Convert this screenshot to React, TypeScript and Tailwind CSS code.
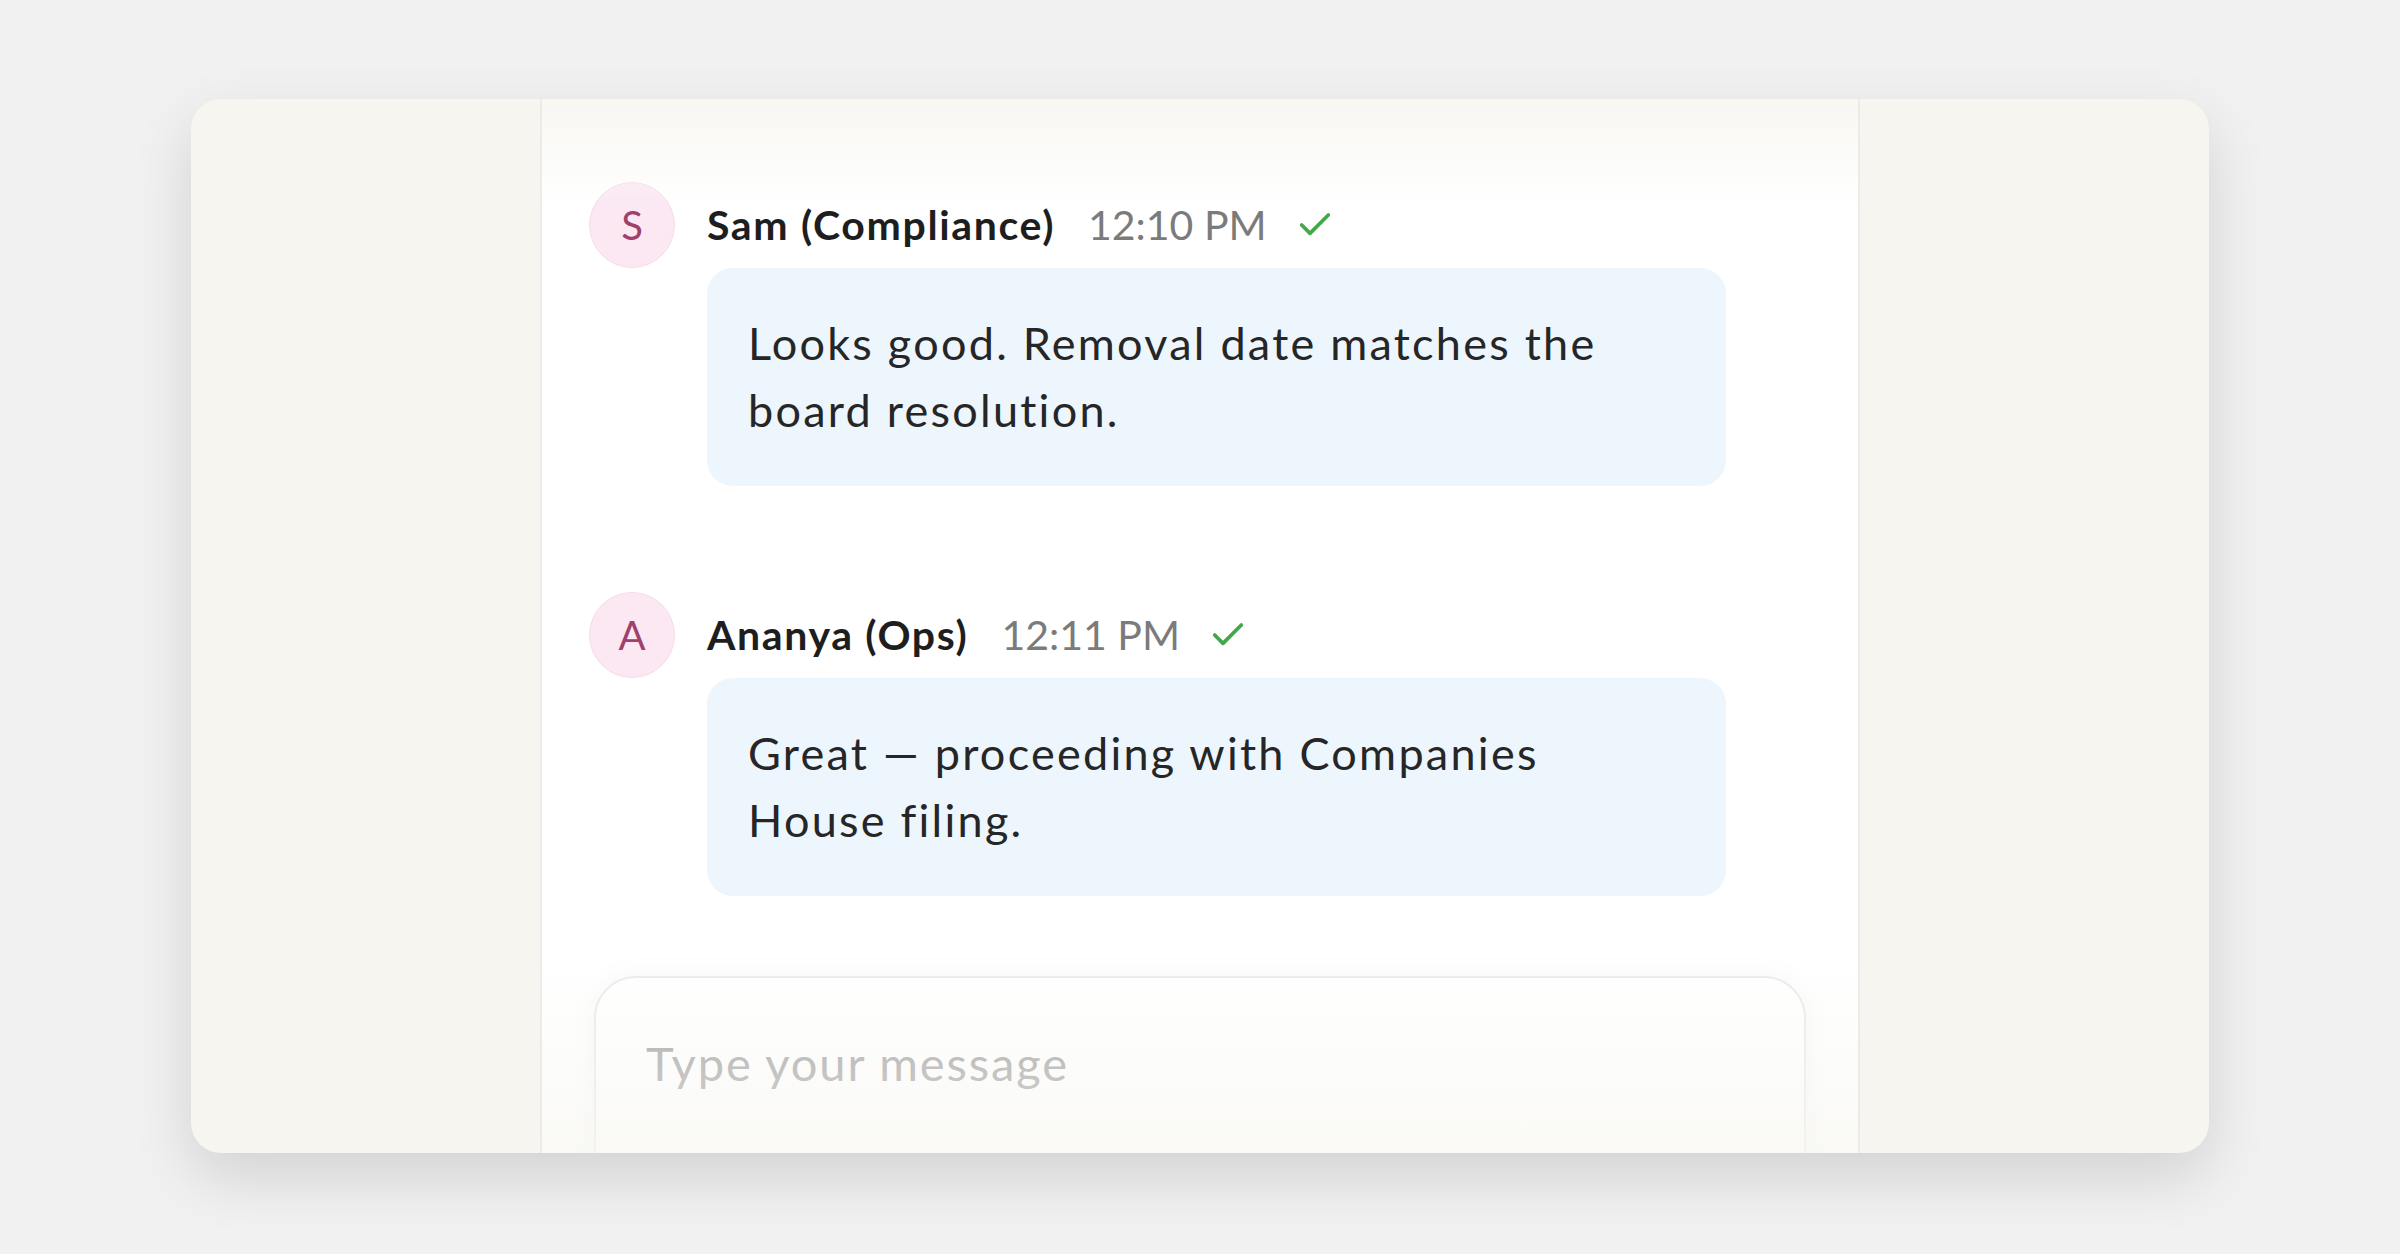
import { Check } from "lucide-react";

interface Message {
  initial: string;
  name: string;
  time: string;
  text: string;
}

const messages: Message[] = [
  {
    initial: "S",
    name: "Sam (Compliance)",
    time: "12:10 PM",
    text: "Looks good. Removal date matches the board resolution.",
  },
  {
    initial: "A",
    name: "Ananya (Ops)",
    time: "12:11 PM",
    text: "Great — proceeding with Companies House filing.",
  },
];

function ChatMessage({ msg }: { msg: Message }) {
  return (
    <div className="grid grid-cols-[86px_1019px] gap-x-8">
      <div className="flex h-[86px] w-[86px] items-center justify-center rounded-full border border-[#f5dbe9] bg-[#fbe8f2] text-[40px] text-[#9e416c]">
        {msg.initial}
      </div>
      <div className="flex h-[86px] items-center">
        <span className="text-[41px] font-bold tracking-[0.04em] text-[#1e1e1e]">{msg.name}</span>
        <span className="ml-[33px] text-[41px] text-[#7b7b7b]">{msg.time}</span>
        <Check className="ml-[28px] h-[40px] w-[40px] text-[#43a84a]" strokeWidth={2.2} />
      </div>
      <div className="col-start-2 rounded-[26px] bg-[#edf5fd] px-[41px] py-[42px] text-[45px] leading-[67px] tracking-[0.05em] text-[#262626]">
        {msg.text}
      </div>
    </div>
  );
}

export default function App() {
  return (
    <div
      className="min-h-[1254px] w-full bg-[#f1f1f1] pl-[191px] pt-[99px]"
      style={{ fontFamily: "Lato, 'Noto Sans', sans-serif" }}
    >
      <div className="grid h-[1054px] w-[2018px] grid-cols-[349px_1320px_349px] overflow-hidden rounded-[30px] bg-[#f6f5f0] shadow-[0_24px_60px_rgba(0,0,0,0.13)]">
        <div />
        <div className="relative flex flex-col border-x-2 border-[#ecebe7] bg-white">
          {/* top fade */}
          <div className="pointer-events-none absolute inset-x-0 top-0 h-[110px] bg-gradient-to-b from-[#f8f7f2] to-transparent" />

          <div className="flex flex-col gap-[106px] pl-[47px] pt-[83px]">
            {messages.map((m) => (
              <ChatMessage key={m.time} msg={m} />
            ))}
          </div>

          <div className="mt-[80px] px-[52px]">
            <div className="h-[220px] rounded-[42px] border-2 border-[#ebebea] bg-white pl-[50px] pt-[50px] shadow-[0_0_30px_rgba(0,0,0,0.04)]">
              <span className="text-[47px] tracking-[0.04em] text-[#a6a6a6]">Type your message</span>
            </div>
          </div>

          {/* bottom fade */}
          <div className="pointer-events-none absolute inset-x-0 bottom-0 h-[230px] bg-gradient-to-b from-transparent to-[#f7f6f1]/80" />
        </div>
        <div />
      </div>
    </div>
  );
}
